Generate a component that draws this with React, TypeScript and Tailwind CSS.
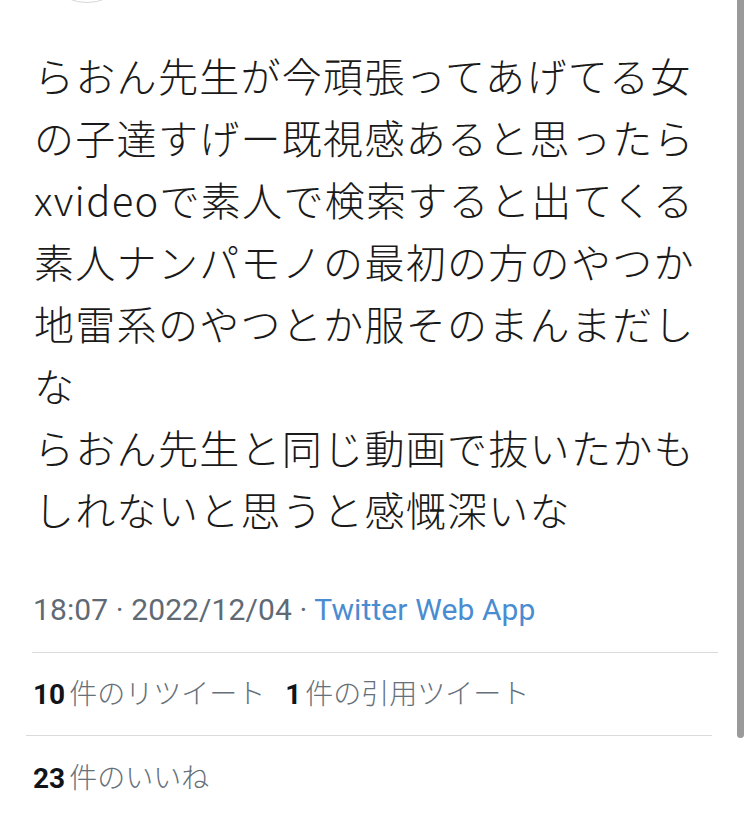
import React from 'react';

const tweetLines = [
    'らおん先生が今頑張ってあげてる女',
    'の子達すげー既視感あると思ったら',
    'xvideoで素人で検索すると出てくる',
    '素人ナンパモノの最初の方のやつか',
    '地雷系のやつとか服そのまんまだし',
    'な',
    'らおん先生と同じ動画で抜いたかも',
    'しれないと思うと感慨深いな',
];

const jpFont = { fontFamily: '"Noto Sans CJK JP", "Noto Sans", sans-serif' };

const Stat: React.FC<{ count: string; label: string }> = ({ count, label }) => (
    <span className="whitespace-nowrap">
        <span className="font-bold text-[#111418] font-['Roboto',sans-serif]">{count}</span>
        <span className="ml-[4px] text-[#66707a] font-light">{label}</span>
    </span>
);

const App: React.FC = () => {
    return (
        <div className="relative w-[750px] h-[815px] bg-white overflow-hidden" style={jpFont}>
            {/* avatar edge peeking in from the top */}
            <div className="absolute left-[39px] top-[-93px] w-[96px] h-[96px] rounded-full border border-[#d6d6d6] bg-white" />

            {/* scroll indicator */}
            <div className="absolute right-[6px] top-0 w-[7px] h-[738px] rounded-b-full bg-[#9a9a9a]" />

            <div className="pl-[34px] pt-[44px] text-[40px] leading-[62px] tracking-[1.3px] text-[#1a1a1a] font-light">
                {tweetLines.map((line, i) => (
                    <div key={i} className="whitespace-nowrap">{line}</div>
                ))}
            </div>

            <div className="mt-[50px] pl-[33px] text-[30px] leading-[40px] tracking-[0.1px] whitespace-nowrap font-['Roboto',sans-serif] text-[#5f6a74]">
                18:07 · 2022/12/04 · <span className="text-[#4a8cd2]">Twitter Web App</span>
            </div>

            <div className="mt-[22px] ml-[32px] w-[686px] h-px bg-[#dadada]" />

            <div className="mt-[19px] pl-[33px] flex gap-[20px] text-[28px] leading-[40px]">
                <Stat count="10" label="件のリツイート" />
                <Stat count="1" label="件の引用ツイート" />
            </div>

            <div className="mt-[20px] ml-[26px] w-[686px] h-px bg-[#dadada]" />

            <div className="mt-[20px] pl-[33px] text-[28px] leading-[40px]">
                <Stat count="23" label="件のいいね" />
            </div>
        </div>
    );
};

export default App;
